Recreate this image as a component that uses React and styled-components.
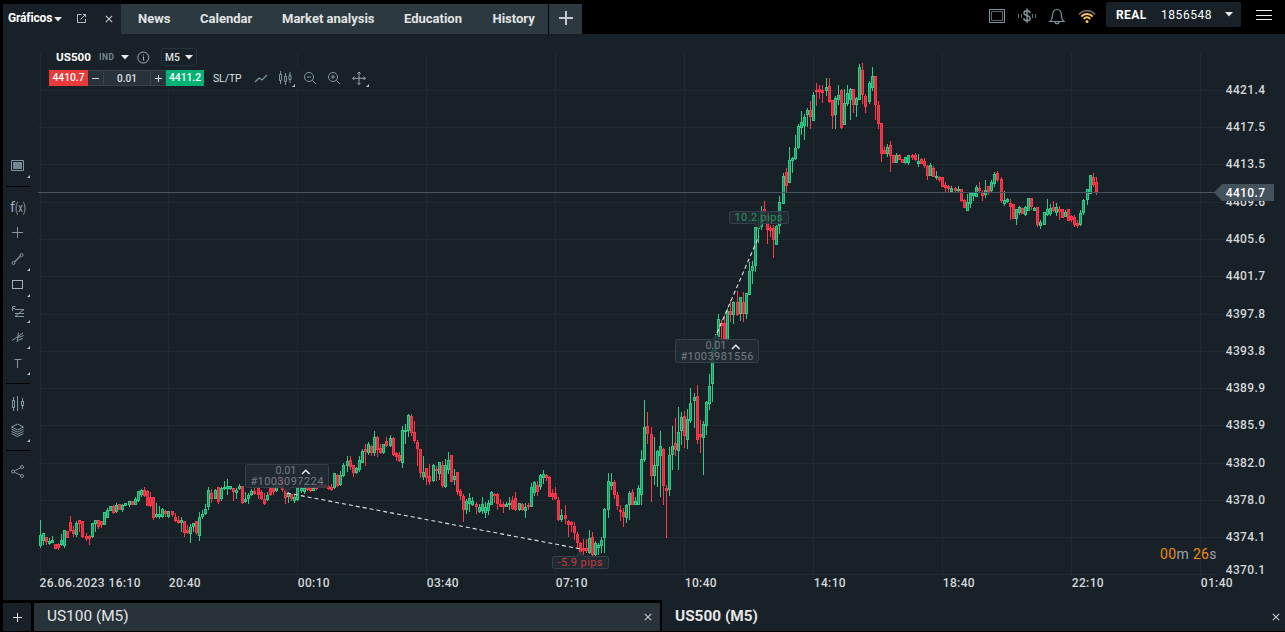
import React from "react";
import styled, { createGlobalStyle, css } from "styled-components";

const GlobalStyle = createGlobalStyle`
  * {
    box-sizing: border-box;
  }
  body {
    margin: 0;
    background: #000;
    overflow: hidden;
    font-family: Roboto, sans-serif;
    color: #dfe2e3;
  }
`;

const Terminal = styled.div`
  width: 1285px;
  height: 632px;
  display: flex;
  flex-direction: column;
  background: #000;
  padding: 0 0 1px 3px;
`;

const TopBar = styled.header`
  height: 34px;
  display: flex;
  flex-shrink: 0;
`;

const TabList = styled.nav`
  display: flex;
  padding-top: 4px;
`;

const ActiveTab = styled.div`
  width: 118px;
  display: flex;
  align-items: center;
  background: #172127;
  padding-left: 5px;
  font-size: 12px;
  font-weight: 700;
  letter-spacing: -0.15px;
  color: #fff;
  svg {
    flex-shrink: 0;
  }
`;

const TabName = styled.span`
  width: 46px;
  margin-top: -2px;
  white-space: nowrap;
`;

const TabActions = styled.div`
  display: flex;
  align-items: center;
  gap: 17px;
  padding-left: 14px;
`;

const Tab = styled.div`
  width: ${(p) => p.$w}px;
  padding-left: 17px;
  line-height: 30px;
  background: #2d3941;
  font-size: 13px;
  font-weight: 700;
  color: #e1e3e4;
  white-space: nowrap;
`;

const AddTab = styled.div`
  width: 33px;
  margin-left: 1px;
  padding-bottom: 2px;
  display: flex;
  align-items: center;
  justify-content: center;
  background: #2d3941;
`;

const Status = styled.div`
  margin-left: auto;
  display: flex;
  padding-top: 2px;
`;

const StatusIcons = styled.div`
  display: flex;
  margin-right: 9px;
  padding-top: 4px;
  gap: 10px;
`;

const Account = styled.div`
  width: 135px;
  height: 25px;
  display: flex;
  align-items: center;
  padding-left: 10px;
  background: #172127;
  border-radius: 2px;
  font-size: 12px;
  color: #fff;
  b {
    width: 45px;
    font-weight: 700;
    letter-spacing: 0.4px;
  }
  span {
    width: 64px;
    letter-spacing: 0.55px;
  }
`;

const Menu = styled.div`
  width: 16px;
  height: 10px;
  margin: 8px 13px 0 15px;
  border-top: 1px solid #e8eaeb;
  border-bottom: 1px solid #e8eaeb;
  display: flex;
  align-items: center;
  &::after {
    content: "";
    width: 100%;
    height: 1px;
    background: #e8eaeb;
  }
`;

const Workspace = styled.main`
  height: 566px;
  display: flex;
  background: #172127;
  flex-shrink: 0;
`;

const Tools = styled.aside`
  width: 35px;
  padding: 119px 0 0 3px;
`;

const Tool = styled.div`
  width: 24px;
  height: ${(p) => p.$h || 26}px;
  display: flex;
  align-items: center;
  justify-content: center;
  position: relative;
  ${(p) =>
    p.$more &&
    css`
      &::after {
        content: "";
        position: absolute;
        right: 0;
        bottom: 1px;
        border-left: 3px solid transparent;
        border-bottom: 3px solid #b9bfc2;
      }
    `}
`;

const Divider = styled.div`
  width: 24px;
  height: 1px;
  margin: 7px 0 6px;
  background: #000;
`;

const ChartArea = styled.section`
  flex: 1;
  position: relative;
`;

const Chart = styled.svg`
  display: block;
  font-family: Roboto, sans-serif;
`;

const Instrument = styled.div`
  position: absolute;
  left: 4px;
  top: 13px;
`;

const InfoRow = styled.div`
  width: 155px;
  height: 20px;
  margin-left: 7px;
  display: flex;
  align-items: center;
  background: #172127;
  svg {
    flex-shrink: 0;
  }
`;

const Symbol = styled.b`
  width: 50px;
  padding-left: 7px;
  font-size: 11.7px;
  color: #fff;
  white-space: nowrap;
`;

const Kind = styled.span`
  width: 22px;
  font-size: 8.5px;
  font-weight: 700;
  letter-spacing: 0.5px;
  color: #75858f;
`;

const Period = styled.div`
  width: 36px;
  height: 18px;
  margin-left: 4px;
  padding-left: 3px;
  display: flex;
  flex-shrink: 0;
  align-items: center;
  gap: 6px;
  border: 1px solid #28333a;
  border-radius: 3px;
  font-size: 10.3px;
  font-weight: 500;
  span {
    width: 14px;
  }
`;

const TradeRow = styled.div`
  width: 330px;
  height: 22px;
  padding-left: 7px;
  display: flex;
  align-items: center;
  background: #172127;
`;

const Price = styled.div`
  width: ${(p) => (p.$buy ? 38 : 39)}px;
  height: 16px;
  line-height: 16px;
  text-align: center;
  font-size: 10.3px;
  font-weight: 500;
  color: #fff;
  background: ${(p) => (p.$buy ? "#05b276" : "#e83a39")};
`;

const Lot = styled.div`
  width: ${(p) => p.$w}px;
  height: 16px;
  display: flex;
  align-items: center;
  justify-content: center;
  background: #28323a;
  border: solid #37424a;
  border-width: 1px 1px 1px 0;
  font-size: 10px;
  font-weight: 500;
`;

const StopLink = styled.span`
  width: 42px;
  padding-left: 9px;
  font-size: 10.3px;
  white-space: nowrap;
`;

const ChartTools = styled.div`
  display: flex;
  gap: 4.4px;
  padding-left: 5px;
`;

const ChartTool = styled.div`
  width: 20px;
  height: 18px;
  display: flex;
  align-items: center;
  justify-content: center;
  position: relative;
  ${(p) =>
    p.$more &&
    css`
      &::after {
        content: "";
        position: absolute;
        right: 0;
        bottom: 0;
        border-left: 3px solid transparent;
        border-bottom: 3px solid #b9bfc2;
      }
    `}
`;

const Timer = styled.div`
  position: absolute;
  left: 1122px;
  top: 511px;
  font-size: 14px;
  line-height: 18px;
  letter-spacing: 0.35px;
  color: #9aa4aa;
  white-space: nowrap;
  b {
    font-weight: 400;
    color: #ee8a0c;
  }
`;

const BottomBar = styled.footer`
  flex: 1;
  display: flex;
  align-items: stretch;
`;

const AddChart = styled.div`
  width: 28px;
  margin: 3px 3px 0 0;
  display: flex;
  align-items: center;
  justify-content: center;
  background: #172127;
`;

const ChartTab = styled.div`
  width: ${(p) => (p.$active ? 623 : 626)}px;
  margin: ${(p) => (p.$active ? "0" : "3px 2px 0 0")};
  padding: ${(p) => (p.$active ? "3px 5px 0 13px" : "0 8px 0 13px")};
  display: flex;
  align-items: center;
  justify-content: space-between;
  background: ${(p) => (p.$active ? "#172127" : "#283239")};
  font-size: 15.4px;
  font-weight: ${(p) => (p.$active ? 700 : 400)};
  color: #e3e5e6;
  span {
    margin-top: -2px;
  }
`;

const Caret = () => (
  <svg width="8" height="5" viewBox="0 0 8 5">
    <path d="M0 0h8L4 4.6z" fill="#e8eaeb" />
  </svg>
);

const Close = () => (
  <svg width="8" height="8" viewBox="0 0 8 8">
    <path d="M.8.8l6.4 6.4M7.2.8L.8 7.2" stroke="#c6cbce" strokeWidth="1.1" />
  </svg>
);

const Icon = ({ children, s = 16, color = "#8297a1" }) => (
  <svg width={s} height={s} viewBox={`0 0 ${s} ${s}`} fill="none" stroke={color} strokeWidth="1">
    {children}
  </svg>
);

// direction, then high / body top / body bottom / low
const CANDLES = `
g520.535.546.548 g533.533.541.545 r537.537.542.545 g538.541.544.545 g536.540.543.543 r544.544.549.549 r543.544.548.550 g534.540.545.546 g530.530.546.548 r531.531.538.538
r516.522.531.532 r526.530.534.537 g521.523.535.537 r520.520.524.532 r521.521.537.538 r533.536.539.541 r535.536.539.545 g523.523.537.538 g520.520.524.532 r520.520.527.529
r521.521.525.528 g512.512.525.525 g508.510.518.518 g506.506.511.511 r505.506.513.514 g503.505.512.513 r504.504.510.510 g504.505.510.512 g503.503.506.506 g501.501.505.507
r501.501.505.505 g497.499.505.505 g491.491.501.502 g489.490.495.497 r487.490.496.497 r490.491.506.506 r492.497.506.507 r497.497.518.520 g503.514.517.518 g506.514.517.519
g508.509.517.518 r510.511.514.517 g511.511.517.518 r511.511.515.517 r513.517.521.522 r516.520.523.524 g517.520.523.532 r521.521.533.537 r525.530.533.534 g524.527.534.543
g523.523.527.532 r521.521.533.535 g512.517.536.541 g510.514.517.519 g504.509.514.515 g487.490.507.510 r489.493.499.503 g489.490.499.499 r487.487.502.504 g487.488.499.501
g481.487.489.490 g479.486.489.495 g486.486.489.490 r488.488.492.501 g488.490.493.499 g484.486.489.490 r486.486.503.504 g492.499.502.503 g493.495.499.504 g489.491.495.496
r488.491.494.495 r487.488.495.499 r490.492.499.500 r493.499.504.505 g492.495.500.501 r487.488.495.496 r485.487.492.495 g479.483.491.492 r475.477.485.487 r480.482.490.492
r488.490.498.504 g492.493.497.503 r494.494.499.501 g495.497.501.503 g487.488.500.501 g487.488.491.493 g483.488.492.494 r485.487.490.491 r486.488.491.492 g486.488.491.491
r483.485.489.490 r484.485.487.488 r484.485.487.488 r484.485.487.488 r485.486.489.490 r484.487.490.491 g473.473.488.489 r474.475.486.487 g471.475.485.486 g463.465.476.477
g456.461.466.472 r456.460.467.470 r465.465.473.477 g467.468.473.474 g456.460.470.472 g449.451.463.463 r444.449.452.466 g442.444.453.455 r445.446.453.456 g431.437.453.456
r436.437.450.457 r444.448.453.454 g444.444.453.454 r437.441.446.447 g435.438.446.447 r437.438.455.456 r452.453.457.461 r452.455.461.462 g426.430.463.468 g424.430.432.444
g414.415.431.437 r414.416.433.436 r421.432.441.443 r440.442.449.466 r449.449.473.478 g456.472.477.480 r468.468.478.485 r464.476.482.485 g464.465.481.482 r466.469.471.481
g462.462.474.480 r461.465.486.488 g459.465.487.488 g452.460.470.474 r455.455.482.482 g469.476.480.485 r472.472.492.495 r489.491.496.500 r494.496.510.522 g499.501.510.514
g493.498.504.512 g497.501.505.506 r502.504.507.514 g504.507.512.513 g497.504.511.514 g502.507.513.518 g500.503.511.515 g491.492.505.505 r493.494.496.503 r493.494.504.510
r499.504.507.507 r502.504.507.513 g502.504.507.507 g497.503.505.510 r496.500.509.510 r492.498.510.511 g503.503.510.511 r503.504.510.511 g503.507.511.518 r503.505.507.510
g483.487.507.507 g481.482.493.496 r481.485.492.496 g474.475.487.490 g470.474.478.484 r474.475.478.481 r476.477.497.497 r489.493.497.500 r487.493.499.500 r497.500.520.521
g509.515.520.522 r505.515.519.524 r520.521.525.537 r521.522.525.532 r522.526.533.540 r532.534.543.548 r542.543.552.556 r539.548.551.556 r539.548.551.553 g530.538.553.554
r532.537.555.556 g541.543.555.557 g543.545.548.555 g537.540.546.553 g508.509.538.553 g473.481.510.518 g473.482.486.490 r480.482.495.499 r492.495.506.510 r505.510.512.521
r508.512.517.527 g504.505.518.523 g491.493.505.520 r489.492.505.505 g497.501.505.505 g485.488.505.505 g450.459.495.505 g400.427.460.462 r412.426.434.444 r427.434.476.502
g437.465.476.485 g450.451.466.487 g431.446.456.497 r448.449.486.505 r485.488.491.538 g447.455.490.496 g426.446.455.470 r418.443.450.456 g407.432.451.470 g412.417.431.445
r411.416.436.448 g409.419.440.449 g388.403.421.423 g393.397.401.428 r385.396.440.444 r420.434.437.453 g421.424.438.475 g401.402.426.435 g374.386.404.410 g347.350.384.402
g334.340.352.355 g314.319.337.343 r320.323.326.342 r315.323.339.342 g308.311.340.341 r300.311.315.322 g301.302.315.324 r291.302.315.316 g297.297.314.321 r292.302.314.322
g293.293.314.319 g262.271.295.295 g261.266.271.284 g227.227.266.272 g218.227.229.243 g206.212.227.230 r201.209.213.218 r213.215.230.244 r225.228.231.237 r225.228.240.258
g225.226.245.245 g196.202.226.234 g173.176.204.204 r168.172.186.192 g147.160.183.183 g157.158.161.173 g135.148.159.160 g124.126.148.149 g111.122.128.135 g114.117.126.140
g108.110.115.127 r101.110.117.129 g92.95.121.121 r83.90.92.106 r85.89.92.99 r85.90.93.103 g78.87.91.96 r78.86.102.103 r100.100.116.129 g96.98.115.129
g85.95.100.105 r89.90.128.129 g89.103.125.125 g85.93.104.106 g88.89.100.120 r89.89.105.113 g97.98.105.117 g64.67.100.100 r63.70.95.104 r94.96.107.113
g81.83.102.104 g67.76.88.91 r76.76.105.120 r101.105.124.129 r123.123.154.162 r146.150.154.154 g144.147.154.157 r141.145.156.172 r155.155.163.163 g153.155.163.163
r154.155.160.160 r159.159.163.163 g157.157.163.164 g155.155.163.165 r154.155.158.160 r153.155.160.161 g154.161.164.167 r158.159.164.164 r158.161.166.168 r165.166.176.180
g163.165.176.176 r166.168.177.177 g171.176.178.180 r176.177.180.182 r177.177.187.187 r182.185.188.192 r185.186.189.192 g186.188.192.192 r187.188.191.192 g186.189.191.192
r189.189.201.202 r199.200.208.208 g194.202.211.211 g193.193.204.208 g192.193.196.201 g185.187.197.197 r182.188.191.193 r190.192.196.201 g180.190.195.198 r186.186.192.195
g180.182.191.192 g172.174.184.187 r171.173.180.182 r177.179.201.203 g191.200.204.206 g198.199.202.203 r199.203.207.220 r204.204.219.219 g209.209.219.225 g206.207.213.215
r208.208.214.214 g206.207.215.216 g198.198.211.211 r198.198.207.210 g207.208.211.211 r207.207.225.227 g220.222.226.229 g212.212.225.225 g199.209.215.216 g204.208.214.216
r201.207.211.212 g203.207.213.216 r206.209.212.220 r209.209.218.218 g210.212.217.217 r209.209.221.221 r215.216.220.222 r215.217.225.227 r220.223.226.228 g210.213.225.226
g199.200.213.215 g189.189.200.205 g175.175.194.194 r173.177.185.187 r177.182.192.195
`
  .trim()
  .split(/\s+/)
  .map((s, i) => {
    const [high, top, bottom, low] = s.slice(1).split(".").map(Number);
    return { up: s[0] === "g", x: Math.floor(40.012 + i * 3.07045), high, top, bottom, low };
  });

const TIMES = [
  [40, "26.06.2023 16:10", 101],
  [168, "20:40", 32],
  [297, "00:10", 32],
  [426, "03:40", 32],
  [555, "07:10", 32],
  [684, "10:40", 32],
  [813, "14:10", 32],
  [942, "18:40", 32],
  [1071, "22:10", 32],
  [1200, "01:40", 32],
];

const PRICES = [
  [90, "4421.4"],
  [127, "4417.5"],
  [164, "4413.5"],
  [202, "4409.6"],
  [239, "4405.6"],
  [276, "4401.7"],
  [314, "4397.8"],
  [351, "4393.8"],
  [388, "4389.9"],
  [425, "4385.9"],
  [463, "4382.0"],
  [500, "4378.0"],
  [537, "4374.1"],
  [574, "4370.1"],
];

const Candle = ({ c }) => {
  const line = c.up ? "#2fcb89" : "#ff3849";
  const h = Math.max(c.bottom - c.top, 2);
  return (
    <g>
      <rect x={c.x} y={c.high} width="1" height={c.low - c.high} fill={line} />
      <rect x={c.x - 1} y={c.top} width="3" height={h} fill={line} />
      {h > 2 && (
        <rect x={c.x} y={c.top + 1} width="1" height={h - 2} fill={c.up ? "#219564" : "#cb2f43"} />
      )}
    </g>
  );
};

const OrderTag = ({ x, y, id, d }) => (
  <g>
    <path d={d} fill="#222c34" fillOpacity=".82" stroke="#35414a" />
    <text x={x + 30.4} y={y + 10} fontSize="11" fill="#747b80" textLength="21">0.01</text>
    <text x={x + 5.4} y={y + 21} fontSize="11" fill="#747b80" textLength="73">{id}</text>
    <path d={`M${x + 57} ${y + 10}l3.8-3.8 3.8 3.8`} fill="none" stroke="#f0f2f2" strokeWidth="1.4" />
  </g>
);

const PriceChart = () => (
  <Chart width="1247" height="566" viewBox="38 34 1247 566">
    <g fill="#202a30">
      {PRICES.map(([y]) => (
        <rect key={y} x="38" y={y} width={y === 574 ? 1180 : 1186} height="1" />
      ))}
      {TIMES.map(([x]) => (
        <rect key={x} x={x} y="53" width="1" height="524" />
      ))}
    </g>
    {CANDLES.map((c, i) => (
      <Candle key={i} c={c} />
    ))}
    <rect x="38" y="192" width="1178" height="1" fill="#465661" />
    <g fill="none" stroke="#dfe4e6" strokeWidth="1.1" strokeDasharray="4 3">
      <path d="M287 493L581 549" />
      <path d="M717 333L759 236" />
    </g>
    <OrderTag
      x={245}
      y={464}
      id="#1003097224"
      d="M247.5 464.5h79q2 0 2 2v19q0 2-2 2h-36l-4 5-4-5h-35q-2 0-2-2v-19q0-2 2-2z"
    />
    <OrderTag
      x={675}
      y={339}
      id="#1003981556"
      d="M677.5 339.5h35l4-5 4 5h36q2 0 2 2v19q0 2-2 2h-79q-2 0-2-2v-19q0-2 2-2z"
    />
    <g fill="#222c34" fillOpacity=".82" stroke="#35414a">
      <path d="M731.5 211.5h55q2 0 2 2v8q0 2-2 2h-24l-4 5-4-5h-23q-2 0-2-2v-8q0-2 2-2z" />
      <path d="M554.5 556.5h22l4-5 4 5h22q2 0 2 2v8q0 2-2 2h-52q-2 0-2-2v-8q0-2 2-2z" />
    </g>
    <text x="734.5" y="221" fontSize="11" fill="#299365" textLength="48">10.2 pips</text>
    <text x="557.5" y="566" fontSize="11" fill="#c33b3d" textLength="45">-5.9 pips</text>
    <g fontSize="12" fontWeight="500" fill="#d5d8da">
      {PRICES.map(([y, label]) => (
        <text key={y} x="1225.7" y={y === 574 ? 574 : y + 4.3} textLength="39.3">{label}</text>
      ))}
      {TIMES.map(([x, label, w]) => (
        <text key={x} x={x === 40 ? 39.6 : x + 0.7} y="587" textLength={w}>{label}</text>
      ))}
    </g>
    <path d="M1214 192.5l8-8.500h52v17h-52z" fill="#43525d" />
    <text x="1225.7" y="197" fontSize="12" fontWeight="500" fill="#fff" textLength="39.3">4410.7</text>
  </Chart>
);

const ToolBar = () => (
  <Tools>
    <Tool $more>
      <Icon>
        <path d="M1.5 2.500h12v10h-12z" />
        <path d="M3 4h9v7H3z" fill="#708893" stroke="none" />
      </Icon>
    </Tool>
    <Divider />
    <Tool>
      <svg width="18" height="18" fill="#9aabb3" fontFamily="Roboto">
        <text x="1" y="14.500" fontSize="14.500">f</text>
        <text x="6" y="14.500" fontSize="12" textLength="11" lengthAdjust="spacingAndGlyphs">(x)</text>
      </svg>
    </Tool>
    <Tool>
      <Icon><path d="M7.5 3v11M2 8.500h11" /></Icon>
    </Tool>
    <Tool $h={27} $more>
      <Icon>
        <circle cx="3.500" cy="12" r="1.500" />
        <circle cx="11.500" cy="4" r="1.500" />
        <path d="M4.500 11l6-6" strokeWidth="1.300" />
      </Icon>
    </Tool>
    <Tool $more>
      <Icon color="#9eb0b8"><rect x="2.5" y="3.5" width="10" height="8" /></Icon>
    </Tool>
    <Tool $more>
      <Icon>
        <path d="M2.5 8V3.5h3M2.5 5.5H5M5 6.5h9l-9 7h9M5 10.5h9" />
      </Icon>
    </Tool>
    <Tool $more>
      <Icon>
        <path d="M2 11.5l11-7.500M8.500 3.500L7 13M8 8.500l5.500-2M7.500 11.500l5.500-2" />
      </Icon>
    </Tool>
    <Tool $more>
      <Icon><path d="M4.5 4.5h7M7.5 4.5v8.500" /></Icon>
    </Tool>
    <Divider />
    <Tool>
      <Icon>
        <path d="M3.5 2v3M3.5 13v3M7.5 1v15M12.5 3v3M12.5 11v3" />
        <rect x="2.5" y="5.5" width="2" height="7" />
        <rect x="11.5" y="6.5" width="2" height="4" />
      </Icon>
    </Tool>
    <Tool $h={27} $more>
      <Icon>
        <path d="M7.5 2l6 3-6 3-6-3zM1.5 7.200l6 3 6-3M1.5 9.400l6 3 6-3M1.5 11.600l6 3 6-3" />
      </Icon>
    </Tool>
    <Divider />
    <Tool $h={28}>
      <Icon>
        <circle cx="3" cy="8.5" r="1.5" />
        <circle cx="12" cy="4" r="1.5" />
        <circle cx="12" cy="13" r="1.5" />
        <path d="M4.4 7.900l6.400-3.200M4.4 9.100l6.400 3.200" />
      </Icon>
    </Tool>
  </Tools>
);

const App = () => {
  return (
    <>
      <GlobalStyle />
      <Terminal>
        <TopBar>
          <TabList>
            <ActiveTab>
              <TabName>Gráficos</TabName>
              <Caret />
              <TabActions>
                <svg width="12" height="12" fill="none" stroke="#b4bcc0">
                  <path d="M5.500 1.500h-4v8h8V6M7 1.500h2.500V4M4.500 6.500l5-5" />
                </svg>
                <Close />
              </TabActions>
            </ActiveTab>
            <Tab $w={62}>News</Tab>
            <Tab $w={82}>Calendar</Tab>
            <Tab $w={122}>Market analysis</Tab>
            <Tab $w={88.5}>Education</Tab>
            <Tab $w={72.5}>History</Tab>
            <AddTab>
              <svg width="14" height="14">
                <path d="M7 0v14M0 7h14" stroke="#c5cacd" strokeWidth="2" />
              </svg>
            </AddTab>
          </TabList>
          <Status>
            <StatusIcons>
              <Icon s={20}>
                <path d="M2.5 3.5h15v13h-15z" />
                <path d="M4.5 5.5h11v9h-11z" stroke="#566a74" />
              </Icon>
              <Icon s={20}>
                <path
                  d="M13.200 7C13 5.400 11.800 4.700 10 4.700c-1.900 0-3.100.9-3.100 2.400 0 3.400 6.300 1.700 6.300 5.200 0 1.600-1.300 2.500-3.200 2.500-1.900 0-3.100-.9-3.300-2.600M10 2.500v14.500"
                  strokeWidth="1.400"
                />
                <path d="M4.500 8v4M1.500 8v4M15.500 8v4M18.500 8v4" stroke="#5c7581" />
              </Icon>
              <Icon s={20}>
                <path
                  d="M3 15.500c2-1.500 2.500-2.500 2.500-5.500 0-4 1.500-6.500 4.500-6.500s4.500 2.500 4.500 6.500c0 3 .5 4 2.500 5.500zM8 16c0 2.300 4 2.300 4 0"
                  strokeWidth="1.200"
                />
              </Icon>
              <Icon s={20} color="#f7c653">
                <path d="M2 8.500c4-5 12-5 16 0" stroke="#76736a" strokeWidth="1.500" />
                <path d="M4.300 10.600c3-3.600 8.400-3.600 11.400 0M6.800 13c1.900-2.200 4.500-2.200 6.400 0" strokeWidth="2" />
                <circle cx="10" cy="15.500" r="1.500" fill="#f7c653" stroke="none" />
              </Icon>
            </StatusIcons>
            <Account>
              <b>REAL</b>
              <span>1856548</span>
              <Caret />
            </Account>
            <Menu />
          </Status>
        </TopBar>
        <Workspace>
          <ToolBar />
          <ChartArea>
            <PriceChart />
            <Instrument>
              <InfoRow>
                <Symbol>US500</Symbol>
                <Kind>IND</Kind>
                <Caret />
                <Icon s={28} color="#9fb1ba">
                  <circle cx="14.3" cy="14.500" r="5.500" />
                  <path d="M14.5 13.500v4M14.5 11.500v1" />
                </Icon>
                <Period>
                  <span>M5</span>
                  <Caret />
                </Period>
              </InfoRow>
              <TradeRow>
                <Price>4410.7</Price>
                <Lot $w={16}>
                  <svg width="7" height="8"><path d="M0 4.5h7" stroke="#d5d8da" /></svg>
                </Lot>
                <Lot $w={47}>0.01</Lot>
                <Lot $w={15}>
                  <svg width="7" height="8"><path d="M0 4.5h7M3.5 1v7" stroke="#d5d8da" /></svg>
                </Lot>
                <Price $buy>4411.2</Price>
                <StopLink>SL/TP</StopLink>
                <ChartTools>
                  <ChartTool>
                    <Icon><path d="M2 12l4-4 3 2 5-5" strokeWidth="1.2" /></Icon>
                  </ChartTool>
                  <ChartTool $more>
                    <Icon>
                      <path d="M3.5 1v3M3.5 11v3M8.5 3v3M8.5 12v3M13 2v3M13 10v3" />
                      <path d="M2.5 4.5h2v6h-2zM7.5 6.5h2v5h-2zM12 5.5h2v4h-2z" />
                    </Icon>
                  </ChartTool>
                  <ChartTool>
                    <Icon><circle cx="7" cy="7" r="4.5" /><path d="M10.3 10.3l3.7 3.7M5 7h4" /></Icon>
                  </ChartTool>
                  <ChartTool>
                    <Icon><circle cx="7" cy="7" r="4.5" /><path d="M10.3 10.3l3.7 3.7M5 7h4M7 5v4" /></Icon>
                  </ChartTool>
                  <ChartTool $more>
                    <Icon color="#95a8b1">
                      <path d="M8 2v12.500M1.700 8.300h12.600M6.300 3.700L8 2l1.700 1.700M6.300 12.800L8 14.500l1.700-1.700M3.400 6.600L1.700 8.300 3.400 10M12.600 6.600l1.700 1.700-1.700 1.700" />
                    </Icon>
                  </ChartTool>
                </ChartTools>
              </TradeRow>
            </Instrument>
            <Timer>
              <b>00</b>m <b>26</b>s
            </Timer>
          </ChartArea>
        </Workspace>
        <BottomBar>
          <AddChart>
            <svg width="9" height="9"><path d="M4.500 0v9M0 4.500h9" stroke="#dfe2e3" /></svg>
          </AddChart>
          <ChartTab>
            <span>US100 (M5)</span>
            <Close />
          </ChartTab>
          <ChartTab $active>
            <span>US500 (M5)</span>
            <Close />
          </ChartTab>
        </BottomBar>
      </Terminal>
    </>
  );
};

export default App;
